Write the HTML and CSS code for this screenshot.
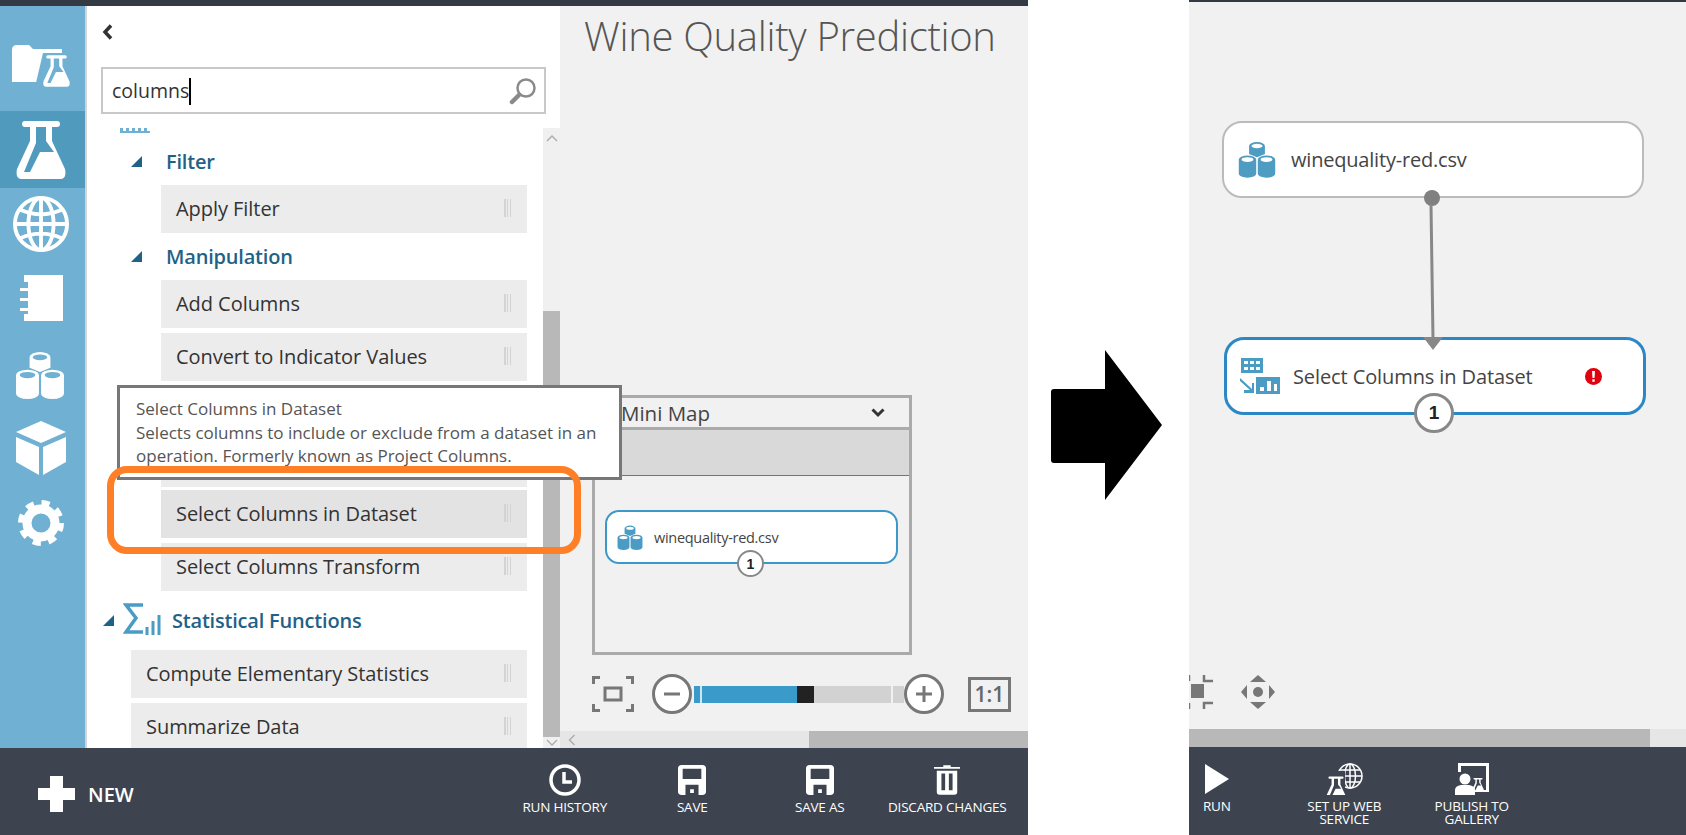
FILE: index.html
```html
<!DOCTYPE html>
<html>
<head>
<meta charset="utf-8">
<title>Wine Quality Prediction</title>
<link rel="stylesheet" href="styles.css">
</head>
<body>
<svg class="defs" width="0" height="0">
  <symbol id="i-barrels" viewBox="0 0 48 48">
    <path fill="currentColor" fill-rule="evenodd" d="M1 24A11 5 0 0 1 23 24V42A11 5 0 0 1 1 42ZM4.500 24a7.500 3 0 1 0 15 0a7.500 3 0 1 0-15 0ZM25 24A11 5 0 0 1 47 24V42A11 5 0 0 1 25 42ZM28.500 24a7.500 3 0 1 0 15 0a7.500 3 0 1 0-15 0ZM14 7A10 5 0 0 1 34 7V17L24 21L14 17ZM17 7a7 2.800 0 1 0 14 0a7 2.800 0 1 0-14 0Z"/>
  </symbol>
  <symbol id="i-flask" viewBox="0 0 50 58">
    <path fill="currentColor" fill-rule="evenodd" d="M9 0H41Q44 0 44 3T41 6H36V20L49 48Q51 58 44 58H6Q-1 58 1 48L14 20V6H9Q6 6 6 3T9 0ZM20 6V22L8 51H14L24 31H38L30 20V6Z"/>
  </symbol>
  <symbol id="i-save" viewBox="0 0 30 32">
    <path fill="currentColor" fill-rule="evenodd" d="M4 0H26Q30 0 30 4V28Q30 32 26 32H4Q0 32 0 28V4Q0 0 4 0ZM5 4V15H25V4ZM8 21V32H22V21ZM13 26H17V30H13Z"/>
  </symbol>
</svg>

<div class="page">
  <section class="pane pane-left">
    <div class="topbar"></div>
    <div class="main">
      <nav class="sidebar">
        <div class="nav-item nav-first">
          <svg width="58" height="42" viewBox="0 0 58 42"><path fill="#fff" d="M0 5Q0 0 5 0H17L21 4H50V37H0Z"/><path fill="#70b0d3" d="M31 8H56L58 42H23Z"/><svg x="31" y="10" width="27" height="32"><use href="#i-flask"/></svg></svg>
        </div>
        <div class="nav-item nav-active">
          <svg width="50" height="58"><use href="#i-flask"/></svg>
        </div>
        <div class="nav-item nav-globe">
          <svg width="58" height="58" viewBox="0 0 60 60"><g fill="none" stroke="#fff" stroke-width="4"><circle cx="30" cy="30" r="27"/><ellipse cx="30" cy="30" rx="13" ry="27"/><path d="M30 3V57M3 30H57M8 15Q30 25 52 15M8 45Q30 35 52 45"/></g></svg>
        </div>
        <div class="nav-item">
          <svg width="44" height="46" viewBox="0 0 44 46"><path fill="#fff" d="M5 0H44V46H5V39H9V36H1V33H9V26H1V23H9V16H1V13H9V7H5Z"/></svg>
        </div>
        <div class="nav-item">
          <svg class="nav-barrels" width="50" height="50"><use href="#i-barrels"/></svg>
        </div>
        <div class="nav-item">
          <svg width="50" height="54" viewBox="0 0 50 54"><path fill="#fff" d="M25 0L50 11L25 22L0 11ZM0 16L23 26V54L0 41ZM50 16L27 26V54L50 41Z"/></svg>
        </div>
        <div class="nav-item">
          <svg width="46" height="46" viewBox="0 0 46 46"><g fill="none" stroke="#fff"><circle cx="23" cy="23" r="14" stroke-width="9"/><circle cx="23" cy="23" r="20" stroke-width="6" stroke-dasharray="8 7.700"/></g></svg>
        </div>
      </nav>

      <aside class="palette">
        <div class="back">
          <svg width="11" height="16" viewBox="0 0 11 16"><path fill="none" stroke="#333" stroke-width="3.500" d="M9 1.500L3 8L9 14.500"/></svg>
        </div>
        <div class="search">
          <span class="search-text">columns</span><span class="caret"></span>
          <svg class="search-icon" width="28" height="28" viewBox="0 0 28 28"><g fill="none" stroke="#8a8a8a"><circle cx="17" cy="11" r="8.500" stroke-width="2.500"/><path stroke-width="4.500" stroke-linecap="round" d="M10 18L3 25"/></g></svg>
        </div>
        <div class="list-wrap">
          <div class="list">
            <div class="clipped-icon"></div>
            <h3 class="group group-filter"><span class="tri"></span>Filter</h3>
            <div class="item"><span>Apply Filter</span><i class="grip"></i></div>
            <h3 class="group group-manip"><span class="tri"></span>Manipulation</h3>
            <div class="item"><span>Add Columns</span><i class="grip"></i></div>
            <div class="item"><span>Convert to Indicator Values</span><i class="grip"></i></div>
            <div class="item item-blank"></div>
            <div class="item item-blank item-short"></div>
            <div class="item item-hover"><span>Select Columns in Dataset</span><i class="grip"></i></div>
            <div class="item"><span>Select Columns Transform</span><i class="grip"></i></div>
            <h3 class="group group-stats">
              <span class="tri"></span>
              <svg width="38" height="32" viewBox="0 0 38 32"><path fill="none" stroke="#4a9cc4" stroke-width="3.500" d="M20 2H3L13 15L3 29H20"/><path fill="none" stroke="#4a9cc4" stroke-width="3" d="M24 32V24M30 32V18M36 32V12"/></svg>
              Statistical Functions
            </h3>
            <div class="item item-wide"><span>Compute Elementary Statistics</span><i class="grip"></i></div>
            <div class="item item-wide"><span>Summarize Data</span><i class="grip"></i></div>
          </div>
          <div class="vscroll">
            <div class="vscroll-top">
              <svg width="12" height="7" viewBox="0 0 12 7"><path fill="none" stroke="#aaa" stroke-width="1.300" d="M1 6L6 1L11 6"/></svg>
            </div>
            <div class="vscroll-thumb"></div>
            <div class="vscroll-bottom">
              <svg width="12" height="7" viewBox="0 0 12 7"><path fill="none" stroke="#aaa" stroke-width="1.300" d="M1 1L6 6L11 1"/></svg>
            </div>
          </div>
        </div>
      </aside>

      <div class="canvas-col">
        <div class="canvas">
          <h1 class="title">Wine Quality Prediction</h1>
          <div class="widgets">
            <div class="minimap">
              <div class="minimap-head">
                <span>Mini Map</span>
                <svg width="14" height="10" viewBox="0 0 14 10"><path fill="none" stroke="#333" stroke-width="3" d="M1.500 1.500L7 7L12.500 1.500"/></svg>
              </div>
              <div class="minimap-band"></div>
              <div class="minimap-body">
                <div class="mini-node">
                  <svg width="26" height="27"><use href="#i-barrels"/></svg>
                  <span>winequality-red.csv</span>
                  <b class="port mini-port">1</b>
                </div>
              </div>
            </div>
            <div class="zoom-row">
              <svg class="fit" width="42" height="36" viewBox="0 0 42 36"><g fill="none" stroke="#777" stroke-width="3"><path d="M1.500 8V1.500H8M34 1.500H40.500V8M1.500 28V34.500H8M34 34.500H40.500V28"/><rect x="13" y="12" width="16" height="12"/></g></svg>
              <span class="zoom-btn">
                <svg width="16" height="4"><rect width="16" height="3" y="0.500" fill="#777"/></svg>
              </span>
              <div class="slider">
                <i class="slider-start"></i><i class="slider-fill"></i><i class="slider-knob"></i><i class="slider-rest"></i><i class="slider-end"></i>
              </div>
              <span class="zoom-btn">
                <svg width="16" height="16"><path fill="#777" d="M6.500 0H9.500V6.500H16V9.500H9.500V16H6.500V9.500H0V6.500H6.500Z"/></svg>
              </span>
              <span class="one-one">1:1</span>
            </div>
          </div>
        </div>
        <div class="hscroll">
          <span class="hscroll-arrow">
            <svg width="8" height="12" viewBox="0 0 8 12"><path fill="none" stroke="#aaa" stroke-width="1.300" d="M6.500 1L1.500 6L6.500 11"/></svg>
          </span>
          <div class="hscroll-thumb"></div>
        </div>
      </div>
    </div>
    <footer class="bottombar">
      <div class="new-btn">
        <svg width="37" height="36" viewBox="0 0 37 36"><path fill="#fff" d="M12 0H25V12H37V24H25V36H12V24H0V12H12Z"/></svg>
        <span>NEW</span>
      </div>
      <div class="actions actions-end">
        <div class="action">
          <svg width="32" height="32" viewBox="0 0 32 32"><g fill="none" stroke="#fff"><circle cx="16" cy="16" r="14" stroke-width="3.500"/><path stroke-width="3.500" d="M15 8V18H23"/></g></svg>
          <span>RUN HISTORY</span>
        </div>
        <div class="action">
          <svg width="28" height="32"><use href="#i-save"/></svg>
          <span>SAVE</span>
        </div>
        <div class="action">
          <svg width="28" height="32"><use href="#i-save"/></svg>
          <span>SAVE AS</span>
        </div>
        <div class="action">
          <svg width="26" height="32" viewBox="0 0 28 32"><path fill="#fff" fill-rule="evenodd" d="M10 0H18V2H28V4H0V2H10ZM3 6H25V29Q25 32 22 32H6Q3 32 3 29ZM8 9V27H12V9ZM16 9V27H20V9Z"/></svg>
          <span>DISCARD CHANGES</span>
        </div>
      </div>
    </footer>

    <div class="tooltip">
      <div>Select Columns in Dataset</div>
      <div>Selects columns to include or exclude from a dataset in an operation. Formerly known as Project Columns.</div>
    </div>
    <div class="highlight"></div>
  </section>

  <div class="arrow-gap">
    <svg width="111" height="150" viewBox="0 0 111 150"><path fill="#000" d="M3 39H54V0L111 75L54 150V113H3Q0 113 0 110V42Q0 39 3 39Z"/></svg>
  </div>

  <section class="pane pane-right">
    <div class="topbar topbar-thin"></div>
    <div class="canvas canvas-right">
      <svg class="wire" width="40" height="160" viewBox="0 0 40 160">
        <path fill="none" stroke="#888" stroke-width="3" d="M20 10L22 144"/>
        <path fill="#888" d="M12 142H32L22 155Z"/>
      </svg>
      <div class="node node-data">
        <svg width="38" height="39"><use href="#i-barrels"/></svg>
        <span>winequality-red.csv</span>
        <b class="out-dot"></b>
      </div>
      <div class="node node-selected">
        <svg width="40" height="37" viewBox="0 0 40 37"><g fill="#4a9cc4"><path fill-rule="evenodd" d="M1 0H23V15H1ZM4 3V6H8V3ZM10 3V6H14V3ZM16 3V6H20V3ZM4 9V12H8V9ZM10 9V12H14V9ZM16 9V12H20V9Z"/><path fill-rule="evenodd" d="M16 19H40V36H16ZM20 29V33H24V29ZM27 23V33H31V23ZM34 26V33H37V26Z"/><path d="M0 20L12 31V25L14 25V35H4L4 32H10L-1 22Z"/></g></svg>
        <span>Select Columns in Dataset</span>
        <svg class="err" width="17" height="17" viewBox="0 0 17 17"><circle cx="8.500" cy="8.500" r="8.500" fill="#e0000f"/><path fill="#fff" d="M7 3H10L9.500 10H7.500ZM7.300 11.300H9.700V13.700H7.300Z"/></svg>
        <b class="port node-port">1</b>
      </div>
      <div class="pan-tools">
        <svg class="fit-solid" width="26" height="36" viewBox="0 0 26 36"><g fill="#777"><rect x="2" y="10" width="13" height="14"/></g><g fill="none" stroke="#777" stroke-width="2.500"><path d="M15 1V7H24M15 35V29H24M0 1V7M0 35V29"/></g></svg>
        <svg width="36" height="36" viewBox="0 0 36 36"><path fill="#777" d="M18 1L26 8H10ZM18 35L10 28H26ZM1 18L7 11V25ZM35 18L29 25V11Z"/><circle cx="18" cy="18" r="5" fill="#777"/></svg>
      </div>
    </div>
    <div class="hscroll hscroll-right">
      <div class="hscroll-thumb"></div>
    </div>
    <footer class="bottombar bottombar-right">
      <div class="actions">
        <div class="action">
          <svg width="24" height="30" viewBox="0 0 24 30"><path fill="#fff" d="M0 0L24 15L0 30Z"/></svg>
          <span>RUN</span>
        </div>
        <div class="action">
          <svg width="38" height="32" viewBox="0 0 38 32"><g fill="none" stroke="#fff" stroke-width="1.500"><circle cx="25" cy="13" r="12"/><ellipse cx="25" cy="13" rx="5.500" ry="12"/><path d="M25 1V25M13 13H37M15 7H35M15 19H35"/></g><g fill="#3d4450"><rect x="0" y="8" width="20" height="24"/></g><svg x="1" y="9" width="20" height="23"><use href="#i-flask"/></svg></svg>
          <span>SET UP WEB<br>SERVICE</span>
        </div>
        <div class="action">
          <svg width="34" height="32" viewBox="0 0 34 32"><path fill="#fff" fill-rule="evenodd" d="M3 0H34V29H28V27H31V3H6V9H3Z"/><svg x="17" y="6" width="12" height="15"><use href="#i-flask"/></svg><circle cx="10" cy="16" r="5.500" fill="#fff"/><path fill="#fff" d="M0 32V27Q0 23 6 22H14Q20 23 20 27V32Z"/></svg>
          <span>PUBLISH TO<br>GALLERY</span>
        </div>
      </div>
    </footer>
  </section>
</div>
</body>
</html>
```
FILE: styles.css
```css
* {
  box-sizing: border-box;
}
body {
  margin: 0;
  font-family: "Open Sans", "Noto Sans", sans-serif;
  color: #333;
  background: #fff;
}
.defs {
  display: block;
  height: 0;
}
.page {
  display: flex;
  width: 1686px;
  height: 835px;
  overflow: hidden;
}
.pane {
  display: flex;
  flex-direction: column;
  height: 835px;
  position: relative;
}
.pane-left {
  width: 1028px;
  flex: none;
}
.pane-right {
  width: 497px;
  flex: none;
  overflow: hidden;
}
.topbar {
  height: 6px;
  flex: none;
  background: #333a44;
}
.topbar-thin {
  height: 2px;
}
.main {
  display: flex;
  flex: 1;
  min-height: 0;
}

/* Left icon rail */
.sidebar {
  width: 87px;
  flex: none;
  padding-top: 24px;
  background: #70b0d3;
  border-right: 2px solid #d4d4d4;
  color: #fff;
}
.nav-item {
  display: flex;
  align-items: center;
  justify-content: center;
  height: 75px;
  padding-right: 4px;
}
.nav-first {
  height: 81px;
  padding-bottom: 10px;
}
.nav-active {
  height: 77px;
  background: #4f9abd;
  width: 85px;
}
.nav-globe {
  height: 72px;
}
.nav-barrels {
  margin: 4px 0 0 -2px;
}

/* Module palette */
.palette {
  width: 473px;
  flex: none;
  display: flex;
  flex-direction: column;
  background: #fff;
}
.back {
  height: 61px;
  padding: 17px 0 0 15px;
  flex: none;
}
.search {
  display: flex;
  align-items: center;
  height: 47px;
  width: 445px;
  margin-left: 14px;
  padding: 0 7px 0 9px;
  border: 2px solid #c8c8c8;
  font-size: 19.500px;
  color: #333;
  flex: none;
}
.caret {
  width: 2px;
  height: 27px;
  margin-top: 1px;
  background: #000;
}
.search-icon {
  margin-left: auto;
}
.list-wrap {
  display: flex;
  flex: 1;
  min-height: 0;
  overflow: hidden;
  margin-top: 14px;
}
.list {
  width: 456px;
  flex: none;
  overflow: hidden;
}
.clipped-icon {
  width: 30px;
  height: 5px;
  margin: 0 0 5px 33px;
  border-bottom: 2px solid #6fb0d3;
  background: repeating-linear-gradient(90deg, #6fb0d3 0 3px, #fff 3px 6px);
}
.group {
  display: flex;
  align-items: center;
  margin: 0;
  height: 47px;
  font-size: 20px;
  font-weight: 600;
  color: #1f6288;
  padding-left: 79px;
  letter-spacing: -0.200px;
}
.tri {
  width: 0;
  height: 0;
  margin-left: -35px;
  margin-right: 24px;
  border-style: solid;
  border-width: 0 0 11px 11px;
  border-color: transparent transparent #1f6288 transparent;
}
.group-manip {
  height: 42px;
  margin: -3px 0 3px;
}
.group-stats {
  height: 54px;
  margin: -2px 0 2px;
  padding: 0 0 2px 16px;
}
.group-stats .tri {
  margin-left: 0;
  margin-right: 9px;
}
.group-stats svg {
  margin: -3px 11px 0 0;
}
.item {
  display: flex;
  align-items: center;
  justify-content: space-between;
  height: 48px;
  margin: 0 16px 5px 74px;
  padding: 0 14px 2px 15px;
  background: #ececec;
  font-size: 20px;
  color: #333;
  letter-spacing: -0.050px;
}
.item-short {
  margin-bottom: 3px;
}
.item-hover {
  background: #e3e3e3;
}
.item-wide {
  margin-left: 44px;
}
.grip {
  width: 9px;
  height: 18px;
  background: repeating-linear-gradient(90deg, #d3d3d3 0 1.500px, transparent 1.500px 3px);
}
.vscroll {
  width: 17px;
  flex: none;
  background: #f0f0f0;
}
.vscroll-top {
  display: flex;
  justify-content: center;
  height: 183px;
  padding-top: 7px;
}
.vscroll-thumb {
  height: 426px;
  background: #b8b8b8;
}
.vscroll-bottom {
  display: flex;
  justify-content: center;
  padding-top: 2px;
}
.vscroll svg {
  display: block;
}

/* Canvas */
.canvas-col {
  flex: 1;
  display: flex;
  flex-direction: column;
  min-width: 0;
}
.canvas {
  flex: 1;
  position: relative;
  background: #f1f1f1;
  min-height: 0;
}
.title {
  margin: 0;
  padding: 3px 0 0 24px;
  font-size: 40px;
  font-weight: 300;
  line-height: 54px;
  color: #555;
  letter-spacing: -0.300px;
}
.widgets {
  position: absolute;
  left: 32px;
  top: 389px;
  width: 420px;
}
.minimap {
  width: 320px;
  height: 260px;
  border: 3px solid #aaa;
  display: flex;
  flex-direction: column;
}
.minimap-head {
  display: flex;
  align-items: center;
  justify-content: space-between;
  height: 29px;
  padding: 0 24px 0 26px;
  font-size: 20.500px;
  color: #444;
  flex: none;
}
.minimap-band {
  height: 49px;
  flex: none;
  background: #d9d9d9;
  border-top: 3px solid #aaa;
  border-bottom: 1px solid #6f757c;
}
.minimap-body {
  flex: 1;
  padding: 34px 11px 0 10px;
}
.mini-node {
  position: relative;
  display: flex;
  align-items: center;
  height: 54px;
  padding-left: 10px;
  background: #fff;
  border: 2px solid #3b99c9;
  border-radius: 14px;
  color: #4a9cc4;
}
.mini-node span {
  margin-left: 11px;
  font-size: 14.500px;
  color: #444;
  letter-spacing: -0.300px;
}
.port {
  position: absolute;
  display: flex;
  align-items: center;
  justify-content: center;
  background: #fff;
  border: 2px solid #888;
  border-radius: 50%;
  color: #222;
  font-family: "Liberation Sans", sans-serif;
}
.mini-port {
  left: 130px;
  bottom: -15px;
  width: 27px;
  height: 27px;
  font-size: 14px;
}
.zoom-row {
  display: flex;
  align-items: center;
  margin-top: 19px;
  height: 40px;
}
.fit {
  flex: none;
}
.zoom-btn {
  display: flex;
  align-items: center;
  justify-content: center;
  width: 40px;
  height: 40px;
  flex: none;
  margin-left: 18px;
  background: #fff;
  border: 3px solid #777;
  border-radius: 50%;
  position: relative;
}
.zoom-btn + .slider + .zoom-btn {
  margin-left: 0;
}
.slider {
  display: flex;
  width: 210px;
  height: 17px;
  margin-left: 2px;
  flex: none;
}
.slider i {
  display: block;
  height: 100%;
}
.slider-start {
  width: 8px;
  background: #3a9bca;
  border-right: 2px solid #cfe6f1;
}
.slider-fill {
  width: 95px;
  background: #3a9bca;
}
.slider-knob {
  width: 17px;
  background: #222;
}
.slider-rest {
  width: 79px;
  background: #d2d2d2;
  border-right: 2px solid #f1f1f1;
}
.slider-end {
  width: 11px;
  background: #d2d2d2;
}
.one-one {
  display: flex;
  align-items: center;
  justify-content: center;
  width: 43px;
  height: 35px;
  margin-left: 24px;
  flex: none;
  border: 3px solid #777;
  font-size: 21px;
  font-weight: 600;
  color: #666;
}
.hscroll {
  display: flex;
  height: 17px;
  flex: none;
  background: #e6e6e6;
}
.hscroll-arrow {
  display: flex;
  align-items: center;
  width: 249px;
  padding-left: 8px;
  flex: none;
}
.hscroll-thumb {
  flex: 1;
  background: #b8b8b8;
}
.hscroll-right {
  height: 18px;
  padding-right: 36px;
}

/* Bottom command bar */
.bottombar {
  display: flex;
  align-items: flex-start;
  justify-content: space-between;
  height: 87px;
  flex: none;
  background: #3d4450;
  color: #fff;
}
.bottombar-right {
  height: 88px;
  justify-content: flex-start;
}
.new-btn {
  display: flex;
  align-items: center;
  gap: 13px;
  padding: 28px 0 0 38px;
  font-size: 20px;
  font-weight: 600;
}
.actions {
  display: flex;
}
.actions-end {
  padding-right: 17px;
}
.bottombar-right .actions {
  margin-left: -36px;
}
.action {
  display: flex;
  flex-direction: column;
  align-items: center;
  width: 127.500px;
  padding-top: 16px;
  font-size: 13.500px;
  line-height: 13px;
  text-align: center;
  letter-spacing: -0.200px;
}
.action svg {
  display: block;
  height: 32px;
  margin-bottom: 5px;
  flex: none;
  color: #fff;
}

/* Things lying over the palette */
.tooltip {
  position: absolute;
  left: 117px;
  top: 385px;
  width: 505px;
  height: 95px;
  padding: 9px 14px 0 16px;
  background: #fff;
  border: 3px solid #777;
  font-size: 17px;
  line-height: 23.500px;
  color: #555;
}
.highlight {
  position: absolute;
  left: 107px;
  top: 466px;
  width: 474px;
  height: 88px;
  border: 7px solid #ff7f27;
  border-radius: 20px;
}

/* Arrow between the two screenshots */
.arrow-gap {
  width: 161px;
  flex: none;
  display: flex;
  align-items: center;
  justify-content: center;
  padding: 14px 5px 0 0;
  background: #fff;
}

/* Right hand experiment canvas */
.canvas-right {
  overflow: hidden;
}
.wire {
  position: absolute;
  left: 222px;
  top: 193px;
  z-index: 2;
}
.node {
  position: absolute;
  display: flex;
  align-items: center;
  background: #fff;
  border-radius: 20px;
  color: #4f9cc2;
  font-size: 20px;
}
.node span {
  color: #444;
  letter-spacing: -0.200px;
}
.node-data {
  left: 33px;
  top: 119px;
  width: 422px;
  height: 77px;
  padding-left: 14px;
  border: 2px solid #bbb;
}
.node-data span {
  margin-left: 15px;
}
.node-selected {
  left: 35px;
  top: 335px;
  width: 422px;
  height: 78px;
  padding-left: 13px;
  border: 3px solid #2b88c4;
}
.node-selected span {
  margin-left: 13px;
  letter-spacing: -0.100px;
}
.err {
  margin-left: auto;
  margin-right: 41px;
}
.out-dot {
  position: absolute;
  left: 200px;
  bottom: -10px;
  width: 16px;
  height: 16px;
  border-radius: 50%;
  background: #808080;
}
.node-port {
  left: 187px;
  bottom: -21px;
  width: 40px;
  height: 40px;
  border-width: 3px;
  font-size: 19px;
  font-weight: 700;
}
.pan-tools {
  position: absolute;
  left: 0;
  top: 672px;
  display: flex;
  align-items: center;
  gap: 25px;
}
```
